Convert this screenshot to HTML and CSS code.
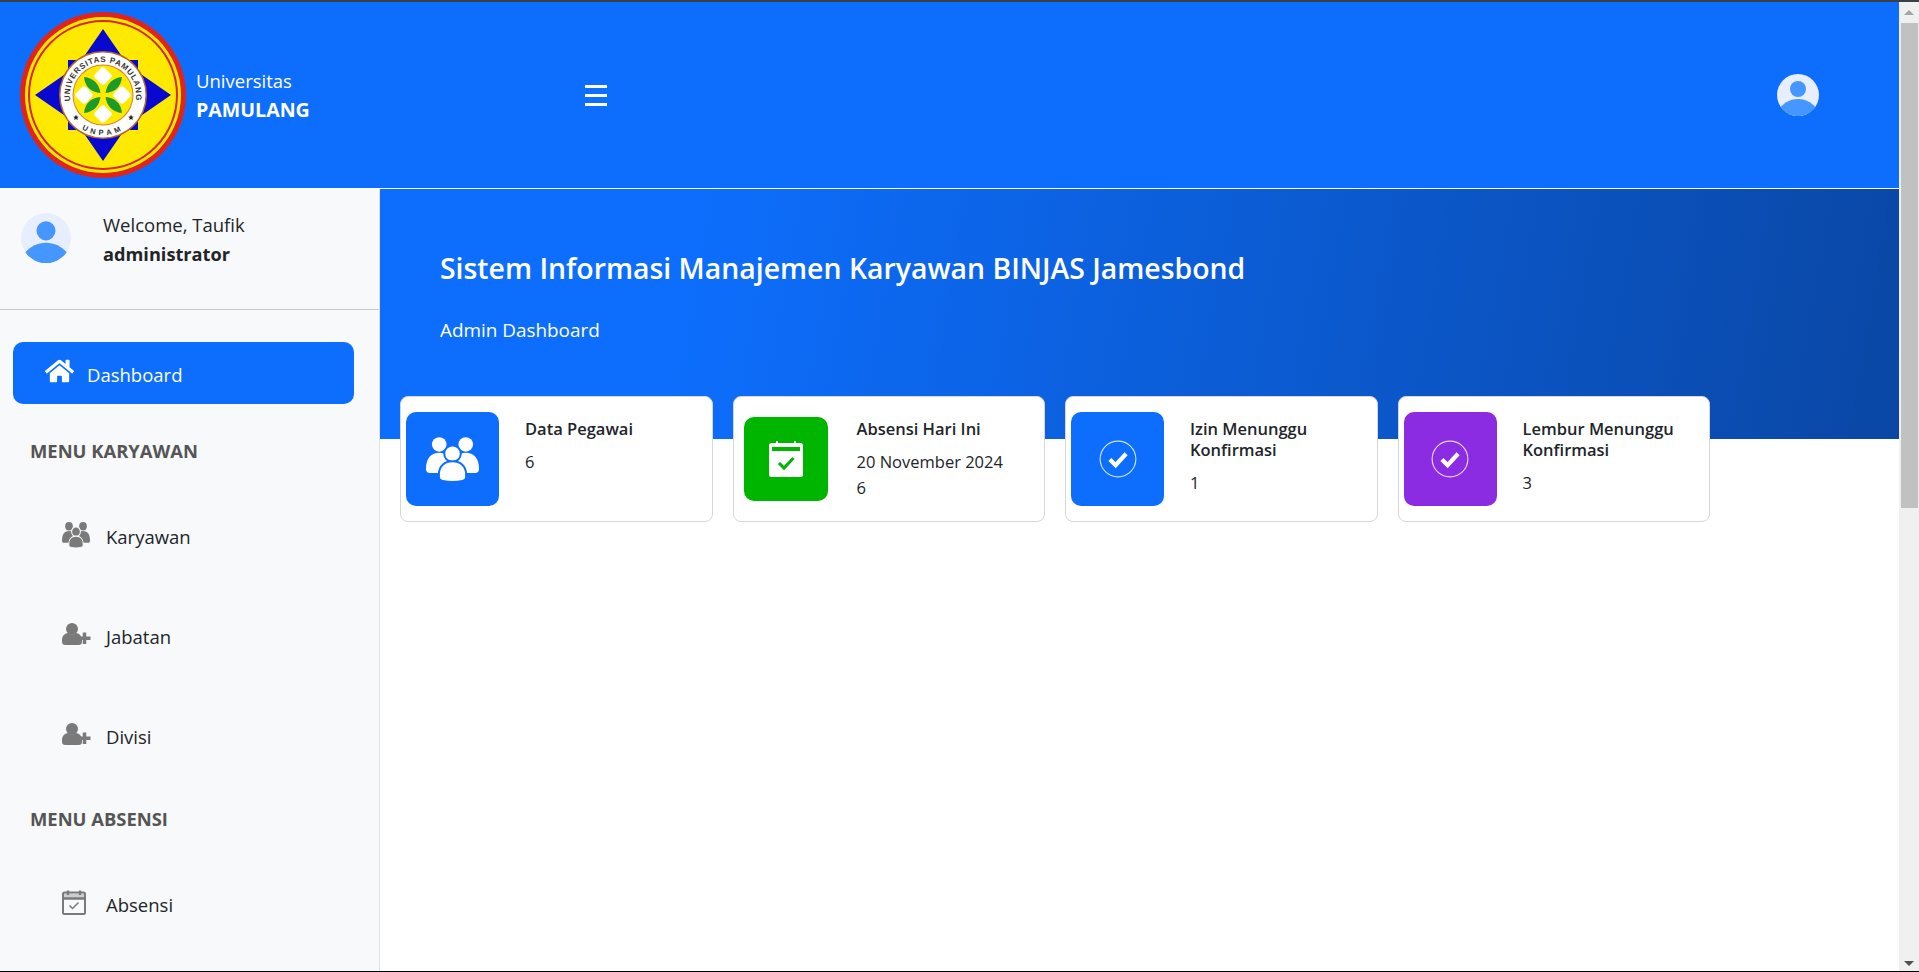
FILE: index.html
```html
<!DOCTYPE html>
<html lang="en">
<head>
<meta charset="UTF-8">
<meta name="viewport" content="width=device-width, initial-scale=1.0">
<title>Sistem Informasi Manajemen Karyawan</title>
<link rel="stylesheet" href="styles.css">
</head>
<body>
<svg class="sprites" aria-hidden="true">
  <defs>
    <g id="userPic">
      <circle cx="21" cy="21" r="21" fill="#e7eeff"/>
      <circle cx="21" cy="15" r="8" fill="#4696ff"/>
      <path d="M3.700 33C8 28 14 25 21 25C28 25 34 28 38.300 33A21 21 0 0 1 3.700 33Z" fill="#4696ff"/>
    </g>
    <g id="people">
      <circle cx="40" cy="22" r="22"/>
      <circle cx="120" cy="22" r="22"/>
      <path d="M0 96C0 62 16 47 40 47C64 47 80 62 80 96C80 104 76 108 70 108H12C4 108 0 104 0 96Z"/>
      <path d="M160 96C160 62 144 47 120 47C96 47 80 62 80 96C80 104 84 108 90 108H148C156 108 160 104 160 96Z"/>
      <g class="people-front">
        <circle cx="80" cy="50" r="25"/>
        <path d="M39 122V112C39 88 56 73 80 73C104 73 121 88 121 112V122C121 128 117 131 110 132C92 136 68 136 50 132C43 131 39 128 39 122Z"/>
      </g>
    </g>
    <g id="userPlus">
      <circle cx="10" cy="6" r="6"/>
      <path d="M0 19V17C0 13 3 10 6 10C7.500 11 8.500 11.500 10 11.500C11.500 11.500 12.500 11 14 10C17 10 20 13 20 17V19C20 21 18.500 22 17 22H3C1.500 22 0 21 0 19Z"/>
      <path class="plus" d="M22.500 9.500V21M17 15.250H28.500"/>
    </g>
    <g id="checkCircle">
      <circle cx="20" cy="20" r="18.800" fill="none" stroke="#fff" stroke-opacity=".8" stroke-width="1.200"/>
      <path d="M11.500 20.500l6 6 11-12" fill="none" stroke="#fff" stroke-width="4.500"/>
    </g>
  </defs>
</svg>

<div class="app">
  <div class="page">
    <header class="navbar">
      <div class="brand">
        <svg class="logo" viewBox="0 0 166 166">
          <circle cx="83" cy="83" r="83" fill="#e2231a"/>
          <circle cx="83" cy="83" r="78" fill="#fdea00"/>
          <circle cx="83" cy="83" r="75" fill="#d8261c"/>
          <circle cx="83" cy="83" r="73" fill="#fdea00"/>
          <rect x="48" y="48" width="70" height="70" fill="#0808d0"/>
          <path d="M83 17L59.500 51H106.500ZM83 149L59.500 115H106.500ZM15 83L49 59.500V106.500ZM151 83L117 59.500V106.500Z" fill="#0808d0"/>
          <circle cx="83" cy="83" r="44" fill="#b5652f"/>
          <circle cx="83" cy="83" r="42.500" fill="#fff"/>
          <circle cx="83" cy="83" r="30.500" fill="#d9822b"/>
          <circle cx="83" cy="83" r="29.500" fill="#fdea00"/>
          <g fill="#fff">
            <rect x="76" y="57" width="14" height="14" rx="3" transform="rotate(45 83 64)"/>
            <rect x="76" y="95" width="14" height="14" rx="3" transform="rotate(45 83 102)"/>
            <rect x="57" y="76" width="14" height="14" rx="3" transform="rotate(45 64 83)"/>
            <rect x="95" y="76" width="14" height="14" rx="3" transform="rotate(45 102 83)"/>
          </g>
          <g fill="#1c9a2c">
            <path d="M64 65C74 66 79 72 80.500 81C71 80 65 75 64 65Z"/>
            <path d="M102 65C92 66 87 72 85.500 81C95 80 101 75 102 65Z"/>
            <path d="M64 101C74 100 79 94 80.500 85C71 86 65 91 64 101Z"/>
            <path d="M102 101C92 100 87 94 85.500 85C95 86 101 91 102 101Z"/>
          </g>
          <defs>
            <path id="ringTop" d="M52 94.300A33 33 0 1 1 114 94.300"/>
            <path id="ringBottom" d="M48 103A40.500 40.500 0 0 0 118 103"/>
          </defs>
          <text class="logo-text"><textPath href="#ringTop" startOffset="50%" text-anchor="middle">UNIVERSITAS PAMULANG</textPath></text>
          <text class="logo-text logo-text-wide"><textPath href="#ringBottom" startOffset="50%" text-anchor="middle">UNPAM</textPath></text>
          <path d="M56 102.500l.800 2 2 .200-1.500 1.300.500 2-1.800-1.100-1.800 1.100.500-2-1.500-1.300 2-.200ZM111 102.500l.800 2 2 .200-1.500 1.300.500 2-1.800-1.100-1.800 1.100.500-2-1.500-1.300 2-.200Z" fill="#222"/>
        </svg>
        <div class="brand-text">
          <span>Universitas</span>
          <strong>PAMULANG</strong>
        </div>
      </div>
      <button class="toggle" aria-label="Toggle sidebar"><span></span><span></span><span></span></button>
      <svg class="avatar avatar-nav" viewBox="0 0 42 42"><use href="#userPic"/></svg>
    </header>

    <div class="layout">
      <aside class="sidebar">
        <div class="welcome">
          <svg class="avatar" viewBox="0 0 42 42"><use href="#userPic"/></svg>
          <div class="welcome-text">
            <span>Welcome, Taufik</span>
            <strong>administrator</strong>
          </div>
        </div>
        <nav class="menu">
          <a class="menu-link active" href="#">
            <svg class="icon-home" viewBox="0 0 576 512"><path d="M280.400 148.300L96 300.100V464a16 16 0 0 0 16 16l112.100-.3a16 16 0 0 0 15.900-16V368a16 16 0 0 1 16-16h64a16 16 0 0 1 16 16v95.600a16 16 0 0 0 16 16.100L464 480a16 16 0 0 0 16-16V300L295.700 148.300a12.200 12.200 0 0 0-15.300 0zM571.600 251.500L488 182.600V44a12 12 0 0 0-12-12h-56a12 12 0 0 0-12 12v72.600L318.500 43a48 48 0 0 0-61 0L4.300 251.500a12 12 0 0 0-1.600 16.900l25.500 31A12 12 0 0 0 45.200 301l235.200-193.700a12.200 12.200 0 0 1 15.300 0L530.900 301a12 12 0 0 0 16.900-1.600l25.500-31a12 12 0 0 0-1.700-16.900z"/></svg>
            <span>Dashboard</span>
          </a>
          <div class="menu-title title-first">MENU KARYAWAN</div>
          <a class="menu-link sub" href="#">
            <svg class="icon-users" viewBox="0 0 160 135" preserveAspectRatio="none"><use href="#people"/></svg>
            <span>Karyawan</span>
          </a>
          <a class="menu-link sub" href="#">
            <svg class="icon-side" viewBox="0 0 29 22"><use href="#userPlus"/></svg>
            <span>Jabatan</span>
          </a>
          <a class="menu-link sub" href="#">
            <svg class="icon-side" viewBox="0 0 29 22"><use href="#userPlus"/></svg>
            <span>Divisi</span>
          </a>
          <div class="menu-title">MENU ABSENSI</div>
          <a class="menu-link sub" href="#">
            <svg class="icon-cal" viewBox="0 0 24 26"><path d="M6 1.500V6M18 1.500V6M1.500 9.500h21" fill="none" stroke="#7a7a7a" stroke-width="2.400"/><rect x="1" y="3.500" width="22" height="21.500" rx="1.500" fill="none" stroke="#7a7a7a" stroke-width="2"/><path d="M1 4.500h22V9H1z" fill="#7a7a7a" opacity=".35"/><path d="M7.500 16.500l3 3 6-6" fill="none" stroke="#7a7a7a" stroke-width="1.500"/></svg>
            <span>Absensi</span>
          </a>
        </nav>
      </aside>

      <main class="content">
        <section class="hero">
          <h1>Sistem Informasi Manajemen Karyawan BINJAS Jamesbond</h1>
          <p>Admin Dashboard</p>
        </section>
        <section class="cards">
          <div class="card">
            <div class="card-icon blue">
              <svg class="icon-people" viewBox="0 0 160 135"><use href="#people"/></svg>
            </div>
            <div class="card-body">
              <h4>Data Pegawai</h4>
              <p>6</p>
            </div>
          </div>
          <div class="card">
            <div class="card-icon green small">
              <svg class="icon-check-cal" viewBox="0 0 34 36">
                <rect x="0" y="2" width="34" height="34" rx="2.500" fill="#fff"/>
                <path d="M3 6h4V4h2v2h16V4h2v2h4v4H3z" fill="#00b500"/>
                <rect x="7" y="0" width="2" height="6" fill="#fff"/>
                <rect x="25" y="0" width="2" height="6" fill="#fff"/>
                <path d="M10 22l5 5 9.500-10" fill="none" stroke="#00b500" stroke-width="3"/>
              </svg>
            </div>
            <div class="card-body">
              <h4>Absensi Hari Ini</h4>
              <p class="date">20 November 2024</p>
              <p>6</p>
            </div>
          </div>
          <div class="card">
            <div class="card-icon blue">
              <svg class="icon-check" viewBox="0 0 40 40"><use href="#checkCircle"/></svg>
            </div>
            <div class="card-body">
              <h4>Izin Menunggu Konfirmasi</h4>
              <p>1</p>
            </div>
          </div>
          <div class="card">
            <div class="card-icon purple">
              <svg class="icon-check" viewBox="0 0 40 40"><use href="#checkCircle"/></svg>
            </div>
            <div class="card-body">
              <h4>Lembur Menunggu Konfirmasi</h4>
              <p>3</p>
            </div>
          </div>
        </section>
      </main>
    </div>
  </div>

  <div class="scrollbar">
    <div class="arrow-up"></div>
    <div class="thumb"></div>
    <div class="arrow-down"></div>
  </div>
</div>
</body>
</html>
```

FILE: styles.css
```css
html, body {
  height: 100%;
}

body {
  margin: 0;
  font-family: "Open Sans", "Noto Sans", Arial, sans-serif;
  color: #212529;
  background-color: #fff;
  overflow: hidden;
}

.sprites {
  display: none;
}

.app {
  display: flex;
  height: 972px;
  border-top: 2px solid #3b4047;
  border-bottom: 1px solid #000;
  box-sizing: border-box;
}

.page {
  flex: 1;
  min-width: 0;
  display: flex;
  flex-direction: column;
}

/* Top bar */
.navbar {
  height: 186px;
  flex: none;
  display: flex;
  align-items: center;
  background-color: #0d6efd;
  border-bottom: 1px solid #fff;
  color: #fff;
}

.brand {
  width: 585px;
  flex: none;
  display: flex;
  align-items: center;
  padding-left: 20px;
  box-sizing: border-box;
}

.logo {
  width: 166px;
  height: 166px;
  margin-right: 10px;
  flex: none;
}

.logo-text {
  font-family: "Liberation Sans", Arial, sans-serif;
  font-size: 8px;
  font-weight: bold;
  letter-spacing: 0.7px;
  fill: #333;
}

.logo-text-wide {
  font-size: 7.500px;
  letter-spacing: 3.500px;
}

.brand-text span,
.brand-text strong,
.welcome-text span,
.welcome-text strong {
  display: block;
}

.brand-text {
  font-size: 18.500px;
  line-height: 29.500px;
}

.brand-text strong {
  font-size: 19.600px;
}

.toggle {
  width: 22px;
  height: 21px;
  padding: 0;
  background: none;
  border: none;
  display: flex;
  flex-direction: column;
  justify-content: space-between;
}

.toggle span {
  display: block;
  height: 3px;
  background-color: #fff;
}

.avatar {
  width: 50px;
  height: 50px;
  flex: none;
}

.avatar-nav {
  width: 42px;
  height: 42px;
  margin-left: auto;
  margin-right: 80px;
}

/* Sidebar */
.layout {
  flex: 1;
  display: flex;
  min-height: 0;
}

.sidebar {
  width: 380px;
  flex: none;
  background-color: #f8f9fa;
  border-right: 1px solid #dee2e6;
  box-sizing: border-box;
}

.welcome {
  height: 121px;
  display: flex;
  padding: 24px 0 0 21px;
  box-sizing: border-box;
  border-bottom: 1px solid #c8c9cb;
}

.welcome .avatar {
  margin-right: 32px;
}

.welcome-text {
  font-size: 18.500px;
  line-height: 29.500px;
  margin-top: -3px;
}

.welcome-text strong {
  font-size: 18.200px;
}

.menu {
  padding: 32px 25px 0 13px;
  font-size: 18.500px;
}

.menu-link {
  display: flex;
  align-items: center;
  height: 62px;
  padding-left: 32px;
  color: #212529;
  text-decoration: none;
  border-radius: 10px;
}

.menu-link.active {
  color: #fff;
  background-color: #0d6efd;
  padding-top: 2px;
  box-sizing: border-box;
}

.menu-link.sub {
  height: 100px;
  padding-left: 49px;
}

.icon-home {
  width: 29px;
  height: 26px;
  fill: #fff;
  margin-right: 13px;
  margin-bottom: 6px;
}

.icon-side {
  width: 29px;
  height: 22px;
  fill: #7a7a7a;
  margin-right: 15px;
  margin-bottom: 4px;
}

.plus {
  fill: none;
  stroke: #7a7a7a;
  stroke-width: 3.500px;
}

.icon-users {
  width: 28px;
  height: 26px;
  fill: #7a7a7a;
  margin-right: 16px;
  margin-bottom: 2px;
  --ring: #f8f9fa;
}

.icon-cal {
  width: 24px;
  height: 26px;
  margin-right: 20px;
  margin-bottom: 4px;
}

.menu-title {
  font-size: 18.400px;
  font-weight: 700;
  color: #555;
  padding-left: 17px;
  line-height: 24px;
  margin: 21px 0 23px;
}

.menu-title.title-first {
  margin-top: 35px;
}

/* Main */
.content {
  flex: 1;
  min-width: 0;
}

.hero {
  height: 250px;
  padding: 59px 60px 0;
  box-sizing: border-box;
  color: #fff;
  background: linear-gradient(100deg, #0d6efd 20%, #0a47a5 100%);
}

.hero h1 {
  margin: 0;
  font-size: 28.400px;
  font-weight: 600;
  line-height: 40px;
}

.hero p {
  margin: 27px 0 0;
  font-size: 18.900px;
  line-height: 30px;
}

.cards {
  display: flex;
  gap: 20px;
  margin: -43px 0 0 20px;
  width: 1310px;
}

.card {
  flex: 1;
  height: 126px;
  display: flex;
  align-items: center;
  padding-left: 5px;
  background-color: #fff;
  border: 1px solid #d5d7d9;
  border-radius: 8px;
  box-sizing: border-box;
}

.card-icon {
  width: 93px;
  height: 94px;
  flex: none;
  display: flex;
  align-items: center;
  justify-content: center;
  border-radius: 10px;
  margin-right: 26px;
}

.card-icon.small {
  width: 84px;
  height: 84px;
  margin: 0 29px 0 5px;
}

.blue { background-color: #0d6efd; }
.green { background-color: #00b500; }
.purple { background-color: #8b2be2; }

.icon-people {
  width: 53px;
  height: 45px;
  fill: #fff;
  --ring: #0d6efd;
}

.people-front {
  stroke: var(--ring);
  stroke-width: 6px;
}

.icon-check-cal {
  width: 34px;
  height: 36px;
}

.icon-check {
  width: 38px;
  height: 38px;
}

.card-body {
  align-self: flex-start;
  flex: 1;
  min-width: 0;
  padding: 21px 20px 0 0;
}

.card-body h4 {
  margin: 0 0 9.500px;
  font-size: 16.500px;
  font-weight: 600;
  line-height: 21px;
}

.card-body p {
  margin: 0;
  font-size: 16.500px;
  line-height: 26px;
}

/* Scrollbar */
.scrollbar {
  width: 20px;
  flex: none;
  display: flex;
  flex-direction: column;
  align-items: center;
  background-color: #f0f0f0;
}

.thumb {
  width: 17px;
  height: 485px;
  margin: 8px 0 0 1px;
  background-color: #c1c1c1;
}

.arrow-up,
.arrow-down {
  width: 0;
  height: 0;
  border-left: 5px solid transparent;
  border-right: 5px solid transparent;
}

.arrow-up {
  margin-top: 8px;
  border-bottom: 5px solid #a3a3a3;
}

.arrow-down {
  margin-top: auto;
  margin-bottom: 5px;
  border-top: 5px solid #505050;
}
```
